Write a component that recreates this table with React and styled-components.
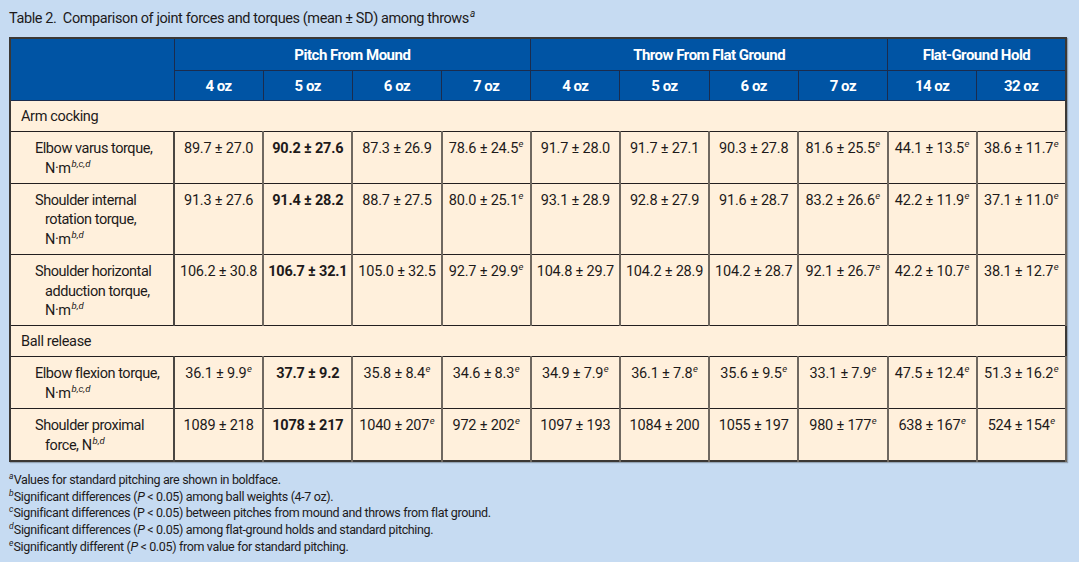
import React from "react";
import styled, { createGlobalStyle } from "styled-components";

const GlobalStyle = createGlobalStyle`
  body {
    margin: 0;
    background: #c6dbf2;
    font-family: Roboto, "Liberation Sans", sans-serif;
    color: #1d1a1a;
  }
`;

const Page = styled.div`
  padding: 8px 12px 0 9px;
`;

const Caption = styled.div`
  font-size: 14.5px;
  letter-spacing: -0.4px;
  line-height: 22px;
  height: 29px;
`;

const Table = styled.table`
  width: 1058px;
  table-layout: fixed;
  border-collapse: collapse;
  border: 2px solid #3b3835;
  box-shadow: 1px 1px 1px rgba(0, 0, 0, 0.25);
`;

const HeadCell = styled.th`
  background: #0054a4;
  color: #fff;
  font-weight: 700;
  font-size: 15px;
  letter-spacing: -0.5px;
  height: ${(p) => p.$h}px;
  padding: 0;
  border: 1.5px solid #1b2c4d;
  text-align: center;
  vertical-align: middle;
`;

const SectionCell = styled.td`
  background: #fff0dc;
  height: 30px;
  padding: 0 10px;
  font-size: 14.5px;
  letter-spacing: -0.35px;
  border-top: 1.5px solid #231f20;
  border-bottom: 1.5px solid #231f20;
`;

const LabelCell = styled.td`
  background: #fff0dc;
  vertical-align: top;
  padding: 7px 4px 4.8px 34px;
  text-indent: -10px;
  font-size: 14.5px;
  line-height: 19.5px;
  letter-spacing: -0.45px;
  border: 1.5px solid #231f20;
  border-right: 2px solid #4a4642;
`;

const ValueCell = styled.td`
  background: #fff0dc;
  vertical-align: top;
  text-align: center;
  white-space: nowrap;
  padding: 7px 1px 4.8px;
  font-size: 14.5px;
  line-height: 19.5px;
  letter-spacing: -0.2px;
  font-weight: ${(p) => (p.$bold ? 700 : 400)};
  border-top: 1.5px solid #231f20;
  border-bottom: 1.5px solid #231f20;
  border-left: 2px solid #6f6860;
  border-right: 2px solid #6f6860;
`;

const Sup = styled.sup`
  font-style: italic;
  font-weight: 400;
  font-size: ${(p) => p.$size || 9.5}px;
  line-height: 0;
  vertical-align: ${(p) => p.$raise || 6}px;
  letter-spacing: 0;
  margin-left: ${(p) => p.$gap || 0}px;
`;

const Notes = styled.div`
  margin-top: 10px;
  font-size: 12.5px;
  letter-spacing: -0.35px;
`;

const Note = styled.div`
  white-space: nowrap;
  height: 16.7px;
  line-height: 16.7px;
`;

const NoteMark = styled.sup`
  font-style: italic;
  font-size: 8.5px;
  line-height: 0;
  vertical-align: 5px;
  margin-right: 0.5px;
`;

const rows = [
  { section: "Arm cocking" },
  {
    label: ["Elbow varus torque,", "N·m"],
    sup: "b,c,d",
    values: ["89.7 ± 27.0", "90.2 ± 27.6", "87.3 ± 26.9", "78.6 ± 24.5e", "91.7 ± 28.0", "91.7 ± 27.1", "90.3 ± 27.8", "81.6 ± 25.5e", "44.1 ± 13.5e", "38.6 ± 11.7e"],
  },
  {
    label: ["Shoulder internal", "rotation torque,", "N·m"],
    sup: "b,d",
    values: ["91.3 ± 27.6", "91.4 ± 28.2", "88.7 ± 27.5", "80.0 ± 25.1e", "93.1 ± 28.9", "92.8 ± 27.9", "91.6 ± 28.7", "83.2 ± 26.6e", "42.2 ± 11.9e", "37.1 ± 11.0e"],
  },
  {
    label: ["Shoulder horizontal", "adduction torque,", "N·m"],
    sup: "b,d",
    values: ["106.2 ± 30.8", "106.7 ± 32.1", "105.0 ± 32.5", "92.7 ± 29.9e", "104.8 ± 29.7", "104.2 ± 28.9", "104.2 ± 28.7", "92.1 ± 26.7e", "42.2 ± 10.7e", "38.1 ± 12.7e"],
  },
  { section: "Ball release" },
  {
    label: ["Elbow flexion torque,", "N·m"],
    sup: "b,c,d",
    values: ["36.1 ± 9.9e", "37.7 ± 9.2", "35.8 ± 8.4e", "34.6 ± 8.3e", "34.9 ± 7.9e", "36.1 ± 7.8e", "35.6 ± 9.5e", "33.1 ± 7.9e", "47.5 ± 12.4e", "51.3 ± 16.2e"],
  },
  {
    label: ["Shoulder proximal", "force, N"],
    sup: "b,d",
    values: ["1089 ± 218", "1078 ± 217", "1040 ± 207e", "972 ± 202e", "1097 ± 193", "1084 ± 200", "1055 ± 197", "980 ± 177e", "638 ± 167e", "524 ± 154e"],
  },
];

const weights = ["4 oz", "5 oz", "6 oz", "7 oz", "4 oz", "5 oz", "6 oz", "7 oz", "14 oz", "32 oz"];

const Value = ({ text }) => {
  const sig = text.endsWith("e");
  return (
    <>
      {sig ? text.slice(0, -1) : text}
      {sig && <Sup $gap={0.5}>e</Sup>}
    </>
  );
};

const Label = ({ lines, sup }) =>
  lines.map((line, i) => (
    <React.Fragment key={i}>
      {i > 0 && <br />}
      {line}
      {i === lines.length - 1 && <Sup $gap={1}>{sup}</Sup>}
    </React.Fragment>
  ));

const P = () => <i>P</i>;

const App = () => (
  <Page>
    <GlobalStyle />
    <Caption>
      Table 2.&nbsp; Comparison of joint forces and torques (mean ± SD) among throws
      <Sup $size={10} $gap={1}>a</Sup>
    </Caption>
    <Table>
      <colgroup>
        <col style={{ width: 164 }} />
        {weights.map((w, i) => (
          <col key={i} />
        ))}
      </colgroup>
      <thead>
        <tr>
          <HeadCell $h={31} rowSpan={2} />
          <HeadCell $h={31} colSpan={4}>Pitch From Mound</HeadCell>
          <HeadCell $h={31} colSpan={4}>Throw From Flat Ground</HeadCell>
          <HeadCell $h={31} colSpan={2}>Flat-Ground Hold</HeadCell>
        </tr>
        <tr>
          {weights.map((w, i) => (
            <HeadCell $h={29} key={i}>{w}</HeadCell>
          ))}
        </tr>
      </thead>
      <tbody>
        {rows.map((row, idx) =>
          row.section ? (
            <tr key={idx}>
              <SectionCell colSpan={11}>{row.section}</SectionCell>
            </tr>
          ) : (
            <tr key={idx}>
              <LabelCell>
                <Label lines={row.label} sup={row.sup} />
              </LabelCell>
              {row.values.map((v, i) => (
                <ValueCell key={i} $bold={i === 1}>
                  <Value text={v} />
                </ValueCell>
              ))}
            </tr>
          )
        )}
      </tbody>
    </Table>
    <Notes>
      <Note><NoteMark>a</NoteMark>Values for standard pitching are shown in boldface.</Note>
      <Note><NoteMark>b</NoteMark>Significant differences (<P /> &lt; 0.05) among ball weights (4-7 oz).</Note>
      <Note><NoteMark>c</NoteMark>Significant differences (P &lt; 0.05) between pitches from mound and throws from flat ground.</Note>
      <Note><NoteMark>d</NoteMark>Significant differences (<P /> &lt; 0.05) among flat-ground holds and standard pitching.</Note>
      <Note><NoteMark>e</NoteMark>Significantly different (<P /> &lt; 0.05) from value for standard pitching.</Note>
    </Notes>
  </Page>
);

export default App;
